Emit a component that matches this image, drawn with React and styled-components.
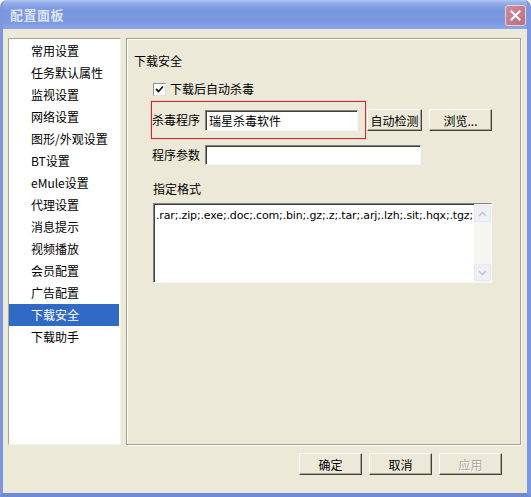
import React from 'react'
import styled, { createGlobalStyle } from 'styled-components'

const GlobalStyle = createGlobalStyle`
html, body {
    margin: 0;
    padding: 0;
    background: #ffffff;
}
body {
    font-family: "Noto Sans CJK SC", "Liberation Sans", sans-serif;
    font-size: 12px;
    color: #000;
}
`

const StyledWindow = styled.div`
width: 531px;
height: 497px;
box-sizing: border-box;
display: flex;
flex-direction: column;
background-color: #ece9d8;
border-left: 3px solid #7d97df;
border-right: 4px solid #7d97df;
border-bottom: 4px solid #7089d6;
border-radius: 7px 7px 0 0;
overflow: hidden;
`
const StyledTitleBar = styled.div`
height: 29px;
margin: 0 -4px 0 -3px;
padding: 0 5px 0 10px;
display: flex;
align-items: center;
justify-content: space-between;
background: linear-gradient(to bottom, #b4c6f2 0, #93adea 3px, #7b97df 10px, #7b98e0 22px, #8ba6e8 29px);
`
const StyledTitle = styled.span`
font-size: 13px;
font-weight: bold;
color: #dbe4f7;
letter-spacing: 0.5px;
`
const StyledCloseButton = styled.div`
width: 21px;
height: 21px;
box-sizing: border-box;
border: 1px solid #e9cfd6;
border-radius: 3px;
background: linear-gradient(to bottom right, #d08d9c, #bd6d80);
display: flex;
align-items: center;
justify-content: center;
margin-top: 2px;
`
const StyledBody = styled.div`
flex: 1;
display: flex;
flex-direction: column;
padding: 9px 6px 0 5px;
`
const StyledMain = styled.div`
display: flex;
gap: 5px;
height: 407px;
`
const StyledList = styled.div`
width: 113px;
box-sizing: border-box;
background-color: #fff;
border: 1px solid #a7a69a;
border-right-color: #f4f3ee;
border-bottom-color: #f4f3ee;
padding-top: 1px;
`
const StyledListItem = styled.div`
height: 22px;
line-height: 21px;
margin-right: 1px;
padding-left: 22px;
color: ${({ selected }) => selected ? '#fff' : '#000'};
background-color: ${({ selected }) => selected ? '#316ac5' : 'transparent'};
white-space: nowrap;
`
const StyledPanel = styled.div`
flex: 1;
box-sizing: border-box;
border: 1px solid #a3a091;
box-shadow: inset 1px 1px 0 #fff, 1px 1px 0 #fff;
padding: 14px 0 0 7px;
display: flex;
flex-direction: column;
`
const StyledHeading = styled.div`
line-height: 16px;
`
const StyledSection = styled.div`
margin-left: 18px;
display: flex;
flex-direction: column;
`
const StyledCheckRow = styled.label`
margin-top: 12px;
padding-left: 1px;
display: flex;
align-items: center;
gap: 4px;
line-height: 16px;
`
const StyledCheckbox = styled.span`
width: 13px;
height: 13px;
box-sizing: border-box;
border: 1px solid #8e8f8f;
border-right-color: #e0e0e0;
border-bottom-color: #e0e0e0;
background: #fff;
display: flex;
align-items: center;
justify-content: center;
`
const StyledFieldRow = styled.div`
display: flex;
align-items: center;
margin-top: ${({ top }) => top}px;
`
const StyledHighlight = styled.div`
display: flex;
align-items: center;
height: 38px;
box-sizing: border-box;
border: 1px solid #d8222a;
box-shadow: 0 0 1px #f08a8a;
padding-right: 7px;
margin-left: -1px;
`
const StyledLabel = styled.span`
width: 53px;
line-height: 16px;
white-space: nowrap;
`
const StyledInput = styled.div`
width: ${({ w }) => w}px;
height: ${({ h }) => h}px;
box-sizing: border-box;
background: #fff;
border-top: 1px solid #848284;
border-left: 1px solid #848284;
border-right: 1px solid #f7f7f3;
border-bottom: 1px solid #f7f7f3;
box-shadow: inset 1px 1px 0 #404040;
padding: 1px 3px;
line-height: ${({ h }) => h - 3}px;
white-space: nowrap;
overflow: hidden;
`
const StyledButton = styled.div`
width: ${({ w }) => w}px;
height: 22px;
box-sizing: border-box;
margin-left: ${({ ml }) => ml || 0}px;
background-color: #ece9d8;
border-top: 1px solid #fff;
border-left: 1px solid #fff;
border-right: 1px solid #404040;
border-bottom: 1px solid #404040;
box-shadow: inset -1px -1px 0 #aca899;
display: flex;
align-items: center;
justify-content: center;
color: ${({ disabled }) => disabled ? '#aca899' : '#000'};
text-shadow: ${({ disabled }) => disabled ? '1px 1px 0 #fff' : 'none'};
white-space: nowrap;
`
const StyledFormatLabel = styled.div`
margin-top: 16px;
padding-left: 1px;
line-height: 16px;
`
const StyledTextArea = styled.div`
margin-top: 6px;
margin-left: 1px;
width: 339px;
height: 80px;
box-sizing: border-box;
display: flex;
background: #fff;
border-top: 1px solid #848284;
border-left: 1px solid #848284;
border-right: 1px solid #f7f7f3;
border-bottom: 1px solid #f7f7f3;
box-shadow: inset 1px 1px 0 #404040;
`
const StyledTextContent = styled.div`
flex: 1;
overflow: hidden;
white-space: nowrap;
padding: 5px 0 0 2px;
font-family: "DejaVu Sans", "Liberation Sans", sans-serif;
font-size: 11px;
letter-spacing: -0.15px;
`
const StyledScrollBar = styled.div`
width: 17px;
display: flex;
flex-direction: column;
justify-content: space-between;
background: #f6f5f0;
padding: 1px 0 1px 0;
`
const StyledScrollArrow = styled.div`
height: 17px;
box-sizing: border-box;
border: 1px solid #e6e9f0;
border-radius: 2px;
background: #eef0f5;
display: flex;
align-items: center;
justify-content: center;
`
const StyledFooter = styled.div`
display: flex;
justify-content: flex-end;
gap: 7px;
margin-top: 8px;
padding-right: 19px;
`

const navList = [
    '常用设置', '任务默认属性', '监视设置', '网络设置', '图形/外观设置', 'BT设置', 'eMule设置',
    '代理设置', '消息提示', '视频播放', '会员配置', '广告配置', '下载安全', '下载助手',
]

const Arrow = ({ down }) => (
    <svg width="9" height="6" viewBox="0 0 9 6">
        <path d={down ? 'M1 1 L4.5 4.5 L8 1' : 'M1 5 L4.5 1.5 L8 5'} fill="none" stroke="#c1c6d0" strokeWidth="1.6" />
    </svg>
)

const App = () => {
    return (
        <>
            <GlobalStyle />
            <StyledWindow>
                <StyledTitleBar>
                    <StyledTitle>配置面板</StyledTitle>
                    <StyledCloseButton>
                        <svg width="11" height="11" viewBox="0 0 11 11">
                            <path d="M1.5 1.5 L9.5 9.5 M9.5 1.5 L1.5 9.5" stroke="#fff" strokeWidth="2" strokeLinecap="square" />
                        </svg>
                    </StyledCloseButton>
                </StyledTitleBar>
                <StyledBody>
                    <StyledMain>
                        <StyledList>
                            {navList.map((text) => (
                                <StyledListItem key={text} selected={text === '下载安全'}>{text}</StyledListItem>
                            ))}
                        </StyledList>
                        <StyledPanel>
                            <StyledHeading>下载安全</StyledHeading>
                            <StyledSection>
                                <StyledCheckRow>
                                    <StyledCheckbox>
                                        <svg width="9" height="9" viewBox="0 0 9 9">
                                            <path d="M1 4 L3.5 6.5 L8 1.5" fill="none" stroke="#1a1a1a" strokeWidth="1.8" />
                                        </svg>
                                    </StyledCheckbox>
                                    下载后自动杀毒
                                </StyledCheckRow>
                                <StyledFieldRow top={4}>
                                    <StyledHighlight>
                                        <StyledLabel>杀毒程序</StyledLabel>
                                        <StyledInput w={153} h={21}>瑞星杀毒软件</StyledInput>
                                    </StyledHighlight>
                                    <StyledButton w={55} ml={1}>自动检测</StyledButton>
                                    <StyledButton w={63} ml={7}>浏览...</StyledButton>
                                </StyledFieldRow>
                                <StyledFieldRow top={6}>
                                    <StyledLabel>程序参数</StyledLabel>
                                    <StyledInput w={216} h={20} />
                                </StyledFieldRow>
                                <StyledFormatLabel>指定格式</StyledFormatLabel>
                                <StyledTextArea>
                                    <StyledTextContent>.rar;.zip;.exe;.doc;.com;.bin;.gz;.z;.tar;.arj;.lzh;.sit;.hqx;.tgz;.uu</StyledTextContent>
                                    <StyledScrollBar>
                                        <StyledScrollArrow><Arrow /></StyledScrollArrow>
                                        <StyledScrollArrow><Arrow down /></StyledScrollArrow>
                                    </StyledScrollBar>
                                </StyledTextArea>
                            </StyledSection>
                        </StyledPanel>
                    </StyledMain>
                    <StyledFooter>
                        <StyledButton w={63}>确定</StyledButton>
                        <StyledButton w={63}>取消</StyledButton>
                        <StyledButton w={63} disabled>应用</StyledButton>
                    </StyledFooter>
                </StyledBody>
            </StyledWindow>
        </>
    )
}

export default App
